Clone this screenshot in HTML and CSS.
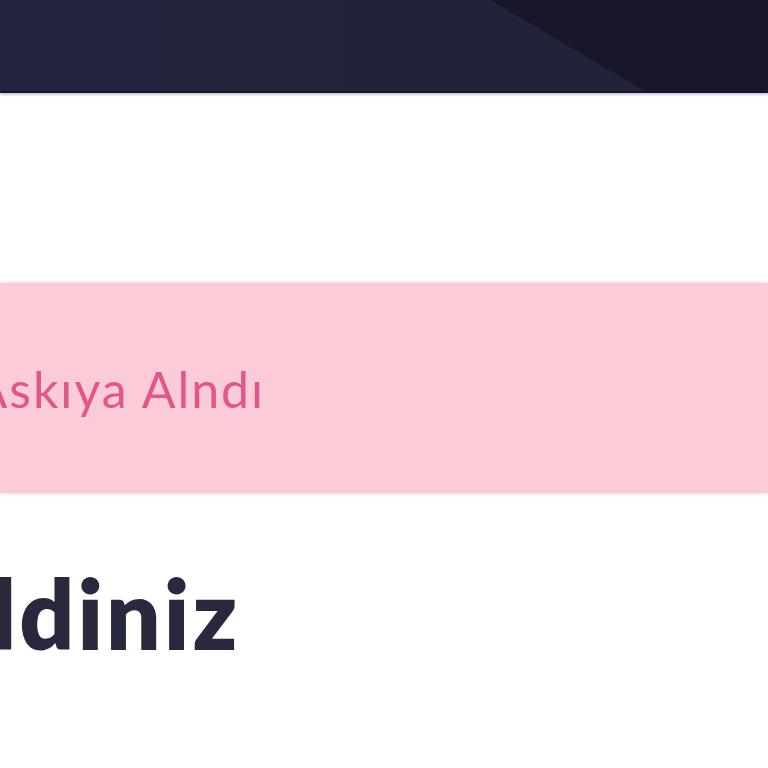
FILE: index.html
```html
<!DOCTYPE html>
<html lang="tr">
<head>
<meta charset="utf-8">
<link rel="stylesheet" href="styles.css">
</head>
<body>
<header class="topbar">
  <div class="topbar-shade"></div>
</header>
<main class="content">
  <div class="alert"><span class="alert-text">Hesap Askıya Alndı</span></div>
  <h1 class="title">Hoş Geldiniz</h1>
</main>
</body>
</html>
```
FILE: styles.css
```css
html, body {
  margin: 0;
  padding: 0;
  background: #ffffff;
  overflow: hidden;
  width: 768px;
  height: 768px;
}
.topbar {
  position: relative;
  height: 91px;
  background: linear-gradient(90deg, #242440 0%, #222238 60%, #222238 100%);
  border-bottom: 2px solid #15152a;
  box-shadow: 0 2px 2px rgba(150, 150, 190, 0.5);
  overflow: hidden;
}
.topbar-shade {
  position: absolute;
  inset: 0;
  background: #17162b;
  clip-path: polygon(490px 0, 768px 0, 768px 91px, 645px 91px);
}
.content {
  display: flex;
  flex-direction: column;
  padding-top: 190px;
}
.alert {
  height: 210px;
  width: 100%;
  background: #fccbd8;
  box-shadow: 0 0 4px rgba(230, 190, 205, 0.9);
  display: flex;
  align-items: center;
  justify-content: flex-start;
}
.alert-text {
  font-family: "Lato", "Open Sans", sans-serif;
  font-weight: 400;
  font-size: 50px;
  letter-spacing: 2px;
  color: #e0588a;
  white-space: nowrap;
  flex-shrink: 0;
  padding-top: 2px;
  margin-left: -188px;
}
.title {
  margin: 72px 0 0 -341px;
  font-family: "Lato", "Open Sans", sans-serif;
  font-weight: 800;
  font-size: 96px;
  line-height: 1;
  letter-spacing: 3px;
  color: #29293d;
  white-space: nowrap;
}
```
